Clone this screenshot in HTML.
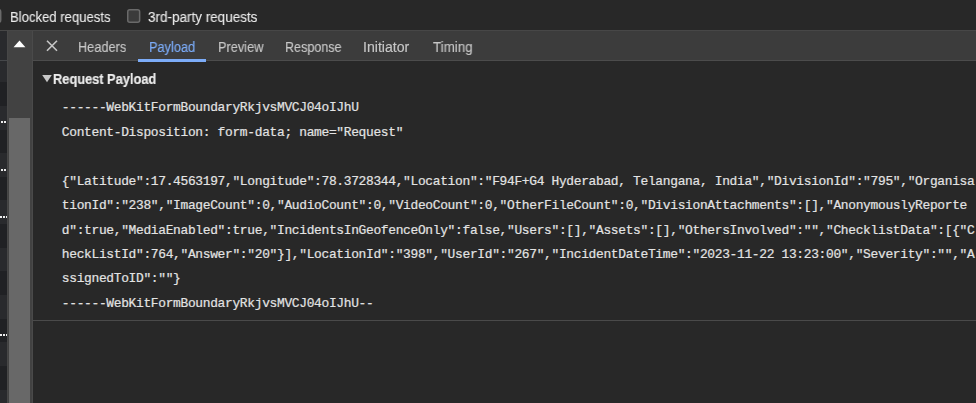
<!DOCTYPE html>
<html><head><meta charset="utf-8">
<style>
html,body{margin:0;padding:0;}
body{width:976px;height:403px;overflow:hidden;background:#282828;position:relative;font-family:"Liberation Sans",sans-serif;}
.abs{position:absolute;}
.t{position:absolute;white-space:pre;line-height:1;transform-origin:0 0;}
#topbar{left:0;top:0;width:976px;height:30px;background:#282828;}
#topline{left:0;top:30px;width:976px;height:1px;background:#474747;}
#tabbar{left:33px;top:31px;width:943px;height:29px;background:#3c3c3c;}
#tabline{left:33px;top:60px;width:943px;height:1px;background:#4c4c4c;}
#strip{left:0;top:31px;width:7px;height:372px;background:#202124;}
.dot{background:#ededed;}
#track{left:7px;top:31px;width:25px;height:372px;background:#424242;}
#trackline{left:32px;top:31px;width:1px;height:372px;background:#4a4a4a;}
#thumb{left:9px;top:118px;width:21px;height:285px;background:#686868;}
.row{left:0;width:7px;background:#292a2d;}
.cb{box-sizing:border-box;border:1.6px solid #6b6b6b;border-radius:3px;background:#3b3b3b;}
.ui{will-change:transform;font-size:14px;color:#ececec;-webkit-text-stroke:0.08px #ececec;}
.tab{will-change:transform;font-size:14px;color:#c7c7c7;-webkit-text-stroke:0.15px currentColor;}
.mono{-webkit-text-stroke:0.2px #e3e3e3;font-family:"Liberation Mono",monospace;font-size:12.9px;color:#e3e3e3;letter-spacing:-0.316px;}
#botline{left:33px;top:320px;width:943px;height:1px;background:#4a4a4a;}
#bot{left:33px;top:321px;width:943px;height:82px;background:#282828;}
</style></head><body>
<div class="abs" id="topbar"></div>
<div class="abs" id="topline"></div>
<div class="abs" id="tabbar"></div>
<div class="abs" id="tabline"></div>
<div class="abs" id="strip"></div>
<div class="abs row" style="top:61px;height:21px"></div>
<div class="abs row" style="top:106px;height:24px"></div>
<div class="abs row" style="top:153px;height:24px"></div>
<div class="abs row" style="top:200px;height:24px"></div>
<div class="abs row" style="top:248px;height:23px"></div>
<div class="abs row" style="top:295px;height:24px"></div>
<div class="abs row" style="top:342px;height:24px"></div>
<div class="abs row" style="top:390px;height:13px"></div>
<div class="abs" style="left:0;top:31px;width:7px;height:29px;background:#292a2d"></div>
<div class="abs" style="left:0;top:60px;width:7px;height:1px;background:#45474a"></div>
<div class="abs dot" style="left:1.0px;top:121.0px;width:1.8px;height:2px"></div>
<div class="abs dot" style="left:4.2px;top:121.0px;width:2.0px;height:2px"></div>
<div class="abs dot" style="left:1.0px;top:169.0px;width:1.8px;height:2px"></div>
<div class="abs dot" style="left:4.2px;top:169.0px;width:2.0px;height:2px"></div>
<div class="abs dot" style="left:0.0px;top:216.1px;width:1.8px;height:2px"></div>
<div class="abs dot" style="left:3.1px;top:216.1px;width:1.9px;height:2px"></div>
<div class="abs dot" style="left:6.1px;top:216.1px;width:0.9px;height:2px"></div>
<div class="abs dot" style="left:0.0px;top:334.1px;width:1.8px;height:2px"></div>
<div class="abs dot" style="left:3.1px;top:334.1px;width:1.9px;height:2px"></div>
<div class="abs dot" style="left:6.1px;top:334.1px;width:0.9px;height:2px"></div>
<div class="abs" id="track"></div>
<div class="abs" id="trackline"></div>
<div class="abs" style="left:7px;top:31px;width:1px;height:372px;background:#474747"></div>
<div class="abs" id="thumb"></div>
<svg class="abs" style="left:13px;top:40px" width="13" height="8" viewBox="0 0 13 8"><path d="M0.5 7.3 L6.5 0.5 L12.4 7.3 Z" fill="#ffffff"/></svg>

<!-- top bar -->
<svg class="abs" style="left:0px;top:4px" width="8" height="24" viewBox="0 0 8 24"><rect x="-11.2" y="5.65" width="11.9" height="12.5" rx="2" ry="2" fill="#3b3b3b" stroke="#6a6a6a" stroke-width="1.5"/></svg>
<div class="t ui" id="t1" style="transform:scaleX(0.9357);left:9.7px;top:10.15px">Blocked requests</div>
<svg class="abs" style="left:120px;top:4px" width="28" height="24" viewBox="0 0 28 24"><rect x="7.75" y="5.65" width="11.9" height="12.5" rx="2" ry="2" fill="#3b3b3b" stroke="#6a6a6a" stroke-width="1.5"/></svg>
<div class="t ui" id="t2" style="transform:scaleX(0.9629);left:147.9px;top:10.15px">3rd-party requests</div>

<!-- tabs -->
<svg class="abs" style="left:46px;top:39.6px" width="12" height="12" viewBox="0 0 12 12"><path d="M1 0.7 L11 10.7 M11 0.7 L1 10.7" stroke="#c7c7c7" stroke-width="1.6" fill="none"/></svg>
<div class="t tab" id="h1" style="transform:scaleX(0.9108);left:78.2px;top:40.25px">Headers</div>
<div class="t tab" id="h2" style="transform:scaleX(0.9132);left:148.6px;top:40.25px;color:#7cacf8">Payload</div>
<div class="t tab" id="h3" style="transform:scaleX(0.9117);left:217.6px;top:40.25px">Preview</div>
<div class="t tab" id="h4" style="transform:scaleX(0.8962);left:284.8px;top:40.25px">Response</div>
<div class="t tab" id="h5" style="transform:scaleX(1.0082);left:363.4px;top:40.25px">Initiator</div>
<div class="t tab" id="h6" style="transform:scaleX(0.9542);left:432.8px;top:40.25px">Timing</div>
<div class="abs" style="left:138px;top:59px;width:68px;height:3px;background:#7cacf8"></div>

<!-- section header -->
<svg class="abs" style="left:42px;top:74.8px" width="10" height="8" viewBox="0 0 10 8"><path d="M0.2 0 L9.8 0 L5 7.3 Z" fill="#c7c7c7"/></svg>
<div class="t ui" id="rp" style="transform:scaleX(0.9156);left:53px;top:72.05px;font-weight:bold;color:#ececec;-webkit-text-stroke:0.2px #ececec">Request Payload</div>

<!-- payload -->
<div class="t mono" style="left:61.8px;top:102px">------WebKitFormBoundaryRkjvsMVCJ04oIJhU</div>
<div class="t mono" style="left:61.8px;top:127px">Content-Disposition: form-data; name="Request"</div>
<div class="t mono" style="left:61.8px;top:176px">{"Latitude":17.4563197,"Longitude":78.3728344,"Location":"F94F+G4 Hyderabad, Telangana, India","DivisionId":"795","Organisa</div>
<div class="t mono" style="left:61.8px;top:200px">tionId":"238","ImageCount":0,"AudioCount":0,"VideoCount":0,"OtherFileCount":0,"DivisionAttachments":[],"AnonymouslyReporte</div>
<div class="t mono" style="left:61.8px;top:225px">d":true,"MediaEnabled":true,"IncidentsInGeofenceOnly":false,"Users":[],"Assets":[],"OthersInvolved":"","ChecklistData":[{"C</div>
<div class="t mono" style="left:61.8px;top:249px">heckListId":764,"Answer":"20"}],"LocationId":"398","UserId":"267","IncidentDateTime":"2023-11-22 13:23:00","Severity":"","A</div>
<div class="t mono" style="left:61.8px;top:273px">ssignedToID":""}</div>
<div class="t mono" style="left:61.8px;top:298px">------WebKitFormBoundaryRkjvsMVCJ04oIJhU--</div>

<div class="abs" id="botline"></div>
<div class="abs" id="bot"></div>
</body></html>
